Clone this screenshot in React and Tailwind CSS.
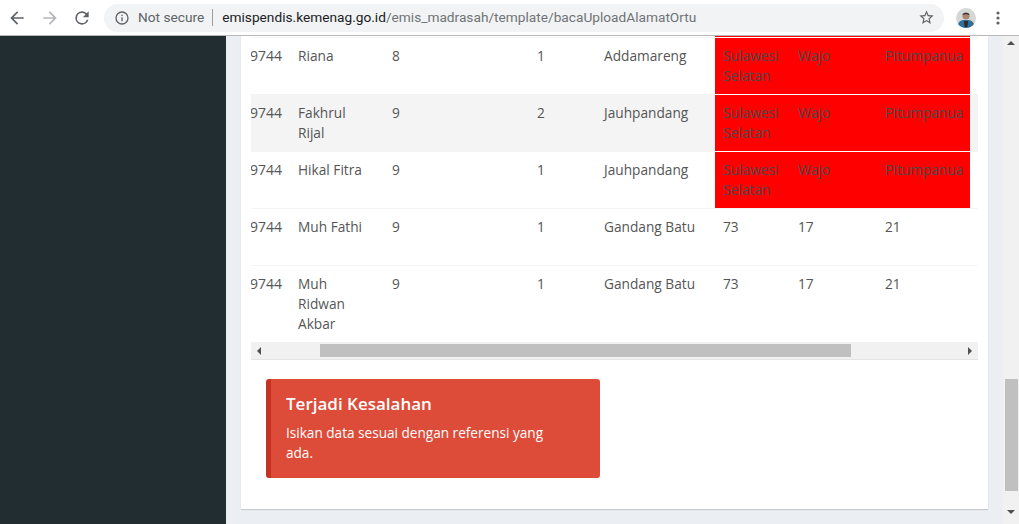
const rows = [
  { name: ["Riana"], kelas: "8", rombel: "1", dusun: "Addamareng", prov: ["Sulawesi", "Selatan"], kab: "Wajo", kec: "Pitumpanua", bad: true },
  { name: ["Fakhrul", "Rijal"], kelas: "9", rombel: "2", dusun: "Jauhpandang", prov: ["Sulawesi", "Selatan"], kab: "Wajo", kec: "Pitumpanua", bad: true, striped: true },
  { name: ["Hikal Fitra"], kelas: "9", rombel: "1", dusun: "Jauhpandang", prov: ["Sulawesi", "Selatan"], kab: "Wajo", kec: "Pitumpanua", bad: true },
  { name: ["Muh Fathi"], kelas: "9", rombel: "1", dusun: "Gandang Batu", prov: ["73"], kab: "17", kec: "21" },
  { name: ["Muh", "Ridwan", "Akbar"], kelas: "9", rombel: "1", dusun: "Gandang Batu", prov: ["73"], kab: "17", kec: "21", tall: true },
];

const Toolbar = () => (
  <div className="flex h-[36px] shrink-0 items-center border-b border-[#b8b8b8] bg-white">
    <svg className="ml-[7px] h-[20px] w-[20px]" viewBox="0 0 24 24" fill="#5f6368">
      <path d="M20 11H7.83l5.59-5.59L12 4l-8 8 8 8 1.41-1.41L7.83 13H20v-2z" />
    </svg>
    <svg className="ml-[13px] h-[20px] w-[20px]" viewBox="0 0 24 24" fill="#b4b6b9">
      <path d="M12 4l-1.41 1.41L16.17 11H4v2h12.17l-5.58 5.59L12 20l8-8z" />
    </svg>
    <svg className="ml-[12px] h-[20px] w-[20px]" viewBox="0 0 24 24" fill="#5f6368">
      <path d="M17.65 6.35A7.96 7.96 0 0 0 12 4a8 8 0 1 0 7.73 10h-2.08A6 6 0 1 1 12 6c1.66 0 3.14.69 4.22 1.78L13 11h7V4l-2.35 2.35z" />
    </svg>
    <div className="ml-[12px] flex h-[28px] w-[840px] items-center rounded-full bg-[#f1f3f4] font-['Roboto',sans-serif] text-[13.7px]">
      <svg className="ml-[10px] h-[16px] w-[16px]" viewBox="0 0 24 24" fill="#5f6368">
        <path d="M11 7h2v2h-2zm0 4h2v6h-2zm1-9a10 10 0 1 0 0 20 10 10 0 0 0 0-20zm0 18a8 8 0 1 1 0-16 8 8 0 0 1 0 16z" />
      </svg>
      <span className="ml-[8px] text-[#5f6368]">Not secure</span>
      <span className="ml-[8px] h-[17px] w-px bg-[#9aa0a6]" />
      <span className="ml-[9px] text-[#202124]">emispendis.kemenag.go.id</span>
      <span className="text-[#6f7377]">/emis_madrasah/template/bacaUploadAlamatOrtu</span>
      <svg className="ml-auto mr-[9px] h-[17px] w-[17px]" viewBox="0 0 24 24" fill="#5f6368">
        <path d="M22 9.24l-7.19-.62L12 2 9.19 8.63 2 9.24l5.46 4.73L5.82 21 12 17.27 18.18 21l-1.63-7.03L22 9.24zM12 15.4l-3.76 2.27 1-4.28-3.32-2.88 4.38-.38L12 6.1l1.71 4.04 4.38.38-3.32 2.88 1 4.28L12 15.4z" />
      </svg>
    </div>
    <svg className="ml-[12px] h-[20px] w-[20px]" viewBox="0 0 20 20">
      <circle cx="10" cy="10" r="10" fill="#d5d8d6" />
      <path d="M2 16c2-4 4-4 8-4s6 0 8 4a10 10 0 0 1-16 0z" fill="#2f6f9a" />
      <path d="M8 13h4l-.5 6h-3z" fill="#2b2b2b" />
      <circle cx="10" cy="8" r="3.6" fill="#a98771" />
      <path d="M6.5 7c0-3 7-3 7 0-2-1-5-1-7 0z" fill="#33363a" />
    </svg>
    <svg className="ml-[20px] h-[14px] w-[4px]" viewBox="0 0 4 14" fill="#5f6368">
      <circle cx="2" cy="2" r="1.6" />
      <circle cx="2" cy="7" r="1.6" />
      <circle cx="2" cy="12" r="1.6" />
    </svg>
  </div>
);

const Row = ({ row }) => {
  // red cells sit over the row border, with a white line on top
  const cell = row.bad ? "-mt-px border-t border-white bg-[#ff0000] px-[8px] pb-[8px] pt-[8px] text-[#4a4a4a]" : "p-[8px]";
  return (
    <div className={`grid grid-cols-[39px_94px_145px_67px_119px_75px_87px_93px_8px] border-t border-[#f4f4f4] ${row.striped ? "bg-[#f4f4f4]" : ""} ${row.tall ? "h-[77px]" : "h-[57px]"}`}>
      <div className="flex justify-end overflow-hidden py-[8px] pr-[8px] text-[14px]">9744</div>
      <div className="p-[8px]">{row.name.map((n) => <div key={n}>{n}</div>)}</div>
      <div className="p-[8px]">{row.kelas}</div>
      <div className="p-[8px]">{row.rombel}</div>
      <div className="p-[8px]">{row.dusun}</div>
      <div className={cell}>{row.prov.map((n) => <div key={n}>{n}</div>)}</div>
      <div className={cell}>{row.kab}</div>
      <div className={cell}>{row.kec}</div>
      <div />
    </div>
  );
};

const App = () => (
  <div className="flex h-[524px] w-[1019px] flex-col overflow-hidden bg-[#ebeff4]">
    <Toolbar />
    <div className="flex min-h-0 flex-1">
      <aside className="w-[226px] shrink-0 bg-[#222d32]" />
      <main className="w-[777px] shrink-0 overflow-hidden pl-[15px]">
        <div className="w-[747px] bg-white px-[10px] pb-[31px] shadow-[0_1px_1px_rgba(0,0,0,0.15)]">
          <div className="font-['Open_Sans',sans-serif] text-[13.7px] leading-[20px] text-[#555555]">
            <div className="ml-[464px] h-px w-[255px] bg-[#ff0000]" />
            {rows.map((row, i) => <Row key={i} row={row} />)}
          </div>
          <div className="relative flex h-[18px] w-[727px] items-center justify-between border-b border-[#e4e4e4] bg-[#f1f1f1] px-[6px]">
            <span className="h-0 w-0 border-y-[4px] border-r-[4px] border-y-transparent border-r-[#505050]" />
            <div className="absolute left-[69px] top-[2px] h-[13px] w-[531px] bg-[#c0c0c0]" />
            <span className="h-0 w-0 border-y-[4px] border-l-[4px] border-y-transparent border-l-[#505050]" />
          </div>
          <div className="ml-[15px] mt-[19px] h-[99px] w-[334px] rounded-[3px] border-l-[5px] border-[#c23321] bg-[#dd4b39] px-[15px] py-[15px] font-['Open_Sans',sans-serif] text-white">
            <h4 className="text-[17px] font-semibold leading-[20px]">Terjadi Kesalahan</h4>
            <p className="mt-[9px] max-w-[265px] text-[13.6px] leading-[20px]">Isikan data sesuai dengan referensi yang ada.</p>
          </div>
        </div>
      </main>
      <div className="ml-auto flex w-[16px] shrink-0 flex-col items-center bg-[#f1f1f1] pt-[5px]">
        <span className="h-0 w-0 border-x-[4px] border-b-[4px] border-x-transparent border-b-[#505050]" />
        <div className="mt-[334px] h-[112px] w-[13px] bg-[#c0c0c0]" />
        <span className="mt-[19px] h-0 w-0 border-x-[4px] border-t-[4px] border-x-transparent border-t-[#505050]" />
      </div>
    </div>
  </div>
);

export default App;
